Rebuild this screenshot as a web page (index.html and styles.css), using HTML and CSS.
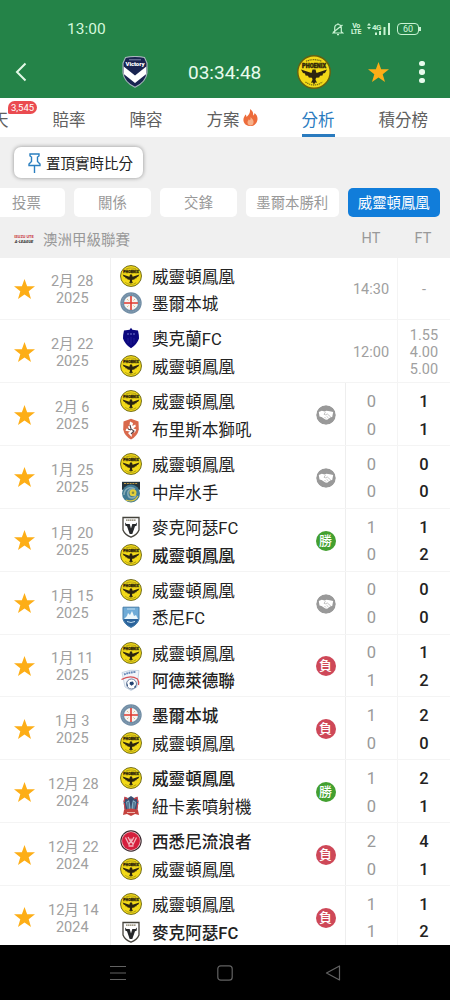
FILE: index.html
```html
<!DOCTYPE html>
<html lang="zh-Hant">
<head>
  <meta charset="UTF-8" />
  <meta name="viewport" content="width=device-width, initial-scale=1.0"/>
  <title>分析</title>
  <link rel="stylesheet" href="styles.css">
</head>
<body>
  <!-- Team crests and icons -->
  <svg class="sprites">
    <symbol id="star" viewBox="0 0 20 20">
      <path fill="#fdae17" d="M10 0l2.5 7H20l-6 4.6 2.2 7.4L10 14.7 3.8 19 6 11.6 0 7h7.5z"/>
    </symbol>
    <symbol id="phoenix" viewBox="0 0 34 34">
      <circle cx="17" cy="17" r="16.2" fill="#f2d918" stroke="#65600f" stroke-width="1.4"/>
      <path d="M9 6.2q8-3 16 0" fill="none" stroke="#6b6414" stroke-width="1.2" stroke-dasharray="1.2 .6"/>
      <text x="17" y="13" class="crest-text" font-size="6.4" textLength="24" lengthAdjust="spacingAndGlyphs" fill="#33290a" stroke="#33290a" stroke-width=".5">PHOENIX</text>
      <path fill="#2b2410" d="M15.500 14.500h3l1 3.500 10.500-3.500-2 3.500-2 .5-.5 2-2.500.3-.8 1.700-3.200.3-.5 2 1.500 3-1.800-.3L17 29.500l-1.200-2-1.800.3 1.500-3-.5-2-3.200-.3-.8-1.700-2.500-.3L8 18.500 6 18l-2-3.500L14.500 18z"/>
      <path d="M8.500 27q8.500 6 17 0" fill="none" stroke="#7c7212" stroke-width="1.3" stroke-dasharray="1.3 .7"/>
    </symbol>
    <symbol id="victory" viewBox="0 0 26 32">
      <path fill="#192450" stroke="#a9b6bd" stroke-width="1.1" d="M3.500 1.500q9.500-2 19 0l2.500 5.500v10q-1 9-12 14.300Q2 26 1 17V7z"/>
      <path fill="#fff" d="M1.700 10.500L13 19.500l11.300-9v7.500L13 27 1.700 18z"/>
      <path d="M7 3.800h12" stroke="#7f89a8" stroke-width="1"/>
      <text x="13" y="9.600" class="crest-text" font-size="6" textLength="19" fill="#fff">Victory</text>
    </symbol>
    <symbol id="city" viewBox="0 0 22 22">
      <circle cx="11" cy="11" r="10.700" fill="#718da5"/>
      <circle cx="11" cy="11" r="9" fill="none" stroke="#9cb0c0" stroke-width=".7" stroke-dasharray="1 .8"/>
      <circle cx="11" cy="11" r="7" fill="#f7f4f2"/>
      <path d="M11 4v14M4 11h14" stroke="#e0392f" stroke-width="1.600"/>
      <path d="M7 7l1.500 1.500M15 7l-1.500 1.500M7 15l1.500-1.500M15 15l-1.500-1.500" stroke="#dcc089"/>
    </symbol>
    <symbol id="auckland" viewBox="0 0 22 22">
      <path fill="#0c087e" d="M11 .8l1.400 2 5.600.7q1 4 1 8-2 6-8 9.800-6-3.800-8-9.800 0-4 1-8l5.600-.7z"/>
      <path d="M7 7h2M10 7h2M13 7h2" stroke="#777ad0" stroke-width="1"/>
      <path d="M8 11v5M11 10v8M14 11v5" stroke="#241e9c" stroke-width=".8"/>
    </symbol>
    <symbol id="brisbane" viewBox="0 0 22 22">
      <path fill="#d9694c" d="M11 .8l7.500 2.700.3 8Q17.500 18 11 21.500 4.500 18 3.200 11.500l.3-8z"/>
      <path fill="#fff" d="M10 3.500l3 1.500-.7 3 3-1.500.5 2-2.500 2 3 1-1.500 3-2.300-.5L11.500 19 8 15l2-1.500-4.500-.8 1-2.200 2.500.8L8 8.500l1.500-.8z"/>
      <path d="M10 7l1 4 3 2-3 3M8 11l3 1" fill="none" stroke="#54464a" stroke-width="1.1"/>
    </symbol>
    <symbol id="mariners" viewBox="0 0 22 22">
      <path fill="#25343c" d="M2 .8h18v8H2z"/>
      <path d="M4 2.500h14" stroke="#bd9b49" stroke-width="1" stroke-dasharray="2 .8"/>
      <circle cx="11" cy="12.500" r="9" fill="#3f7993"/>
      <path d="M4 14c0-6 6-9.500 11-6-5-1-8 2-7 6s7 4 8 0" fill="none" stroke="#87abb5" stroke-width="1.500"/>
      <circle cx="13" cy="11.800" r="3.500" fill="#e5cf3a"/>
      <circle cx="13" cy="11.800" r="1.300" fill="#7d8b49"/>
      <path d="M6 19q8 3 12-4" fill="none" stroke="#dfca40" stroke-width="1.200"/>
    </symbol>
    <symbol id="macarthur" viewBox="0 0 22 22">
      <path fill="#fff" stroke="#45433c" stroke-width="1.300" d="M3 1.500h16V14q-2 5-8 7.200Q5 19 3 14z"/>
      <path d="M6 4.200h10" stroke="#827a61" stroke-width="1.200" stroke-dasharray="1.500 .4"/>
      <path fill="#26282a" d="M5 6.500l1.500 1.500h3.200L11 12.500 12.300 8h3.200L17 6.500l-.4 3.300-1.600.5-2.700 7.700H9.700L7 10.300l-1.600-.5z"/>
    </symbol>
    <symbol id="sydney" viewBox="0 0 22 22">
      <path fill="#6fabd7" stroke="#467ca8" d="M3 1.200h16v12Q17.500 18.500 11 21.500 4.500 18.500 3 13.200z"/>
      <path fill="#2b639b" d="M3.500 13h15Q17.500 18 11 21 4.500 18 3.500 13z"/>
      <path fill="#edf7fb" d="M4 13l3-3 1-3 2 2 2-4 2 5 2-1 2 4z"/>
      <path d="M7 3h8M7 15.500q4 2 8 0" stroke="#c3def0" fill="none"/>
    </symbol>
    <symbol id="adelaide" viewBox="0 0 22 22">
      <path fill="#f1f5fa" stroke="#bccddd" stroke-width=".8" d="M2 3.500Q11 0 19 1.500L17 18l-6 3.500L5 18z"/>
      <path d="M4 5.500q6-2.500 12-2.500" fill="none" stroke="#6889b7" stroke-width="2" stroke-dasharray="1.800 .6"/>
      <path d="M1.500 10.500q9-5 16-.5 2 3 1 6" fill="none" stroke="#d75155" stroke-width="1.300"/>
      <circle cx="11.500" cy="15" r="5" fill="#fff" stroke="#5c7192" stroke-width=".9"/>
      <path fill="#234372" d="M10 13l3-.5 1 2.500-2.500 1.700L9.500 15zM7 14l1 2.500-1 1zM14 18l2-2-.5 3z"/>
    </symbol>
    <symbol id="jets" viewBox="0 0 22 22">
      <path fill="#384e72" d="M4.500 2L8 3l3-2 3 2 3.500-1 1 5-1.500 10-6 3-6-3L3.500 7z"/>
      <path fill="#80aec4" d="M6 7l3-2 2 8 2-8 3 2-1.500 8h-7z"/>
      <path d="M11 4v12M8 7v7M14 7v7" stroke="#32486b"/>
      <path fill="#c5423e" d="M4 15q7-3 14 0l1 5-4-1-4 2-4-2-4 1z"/>
      <path d="M7 17.500h8" stroke="#eeb4aa"/>
      <path d="M4 7l1-4.500L8 4M18 7l-1-4.500L14 4M4.200 8l1 7M17.800 8l-1 7" fill="none" stroke="#d4444a" stroke-width="1.200"/>
    </symbol>
    <symbol id="wanderers" viewBox="0 0 22 22">
      <circle cx="11" cy="11" r="10.700" fill="#35242a"/>
      <circle cx="11" cy="11" r="9.700" fill="#e9c4c8"/>
      <circle cx="11" cy="11" r="8.900" fill="#d51f3d"/>
      <path d="M5.500 7.500l3.500 7 2-5 2 5 3.500-7M8 7l3 5.500L14 7M8.500 16h5" fill="none" stroke="#f3b5bd" stroke-width="1.300"/>
    </symbol>
    <symbol id="handshake" viewBox="0 0 20 20">
      <circle cx="10" cy="10" r="9.800" fill="#999"/>
      <path fill="#fff" d="M2.800 7l3-1.300 3 .8 1.500-.7 3.500.4 3.400.8-1 5-1.600.3-3.500 2.500-1.800-.2L5.500 12l-2-.6z"/>
      <path d="M9.500 7L8 9.300l1.500.5L11.300 9l3.500 3M8.500 12l1.500 1.500M10.500 11.200l2 1.800" fill="none" stroke="#aaa" stroke-width=".7"/>
    </symbol>
  </svg>

  <header class="top">
    <div class="status">
      <span class="time">13:00</span>
      <svg class="bell" width="12" height="14" viewBox="0 0 12 14" fill="none" stroke="#c9f3d3" stroke-width="1.200">
        <path d="M2.700 9.800V6a3.300 3.500 0 016.600 0v3.800l1.500 1.200H1.200zM6 1.200v1.500M5 12.700h2M1 10.500L10.500 3"/>
      </svg>
      <span class="volte"><b>Vo</b><b>LTE</b></span>
      <svg class="signal" width="24" height="14" viewBox="0 0 24 14" fill="#c9f3d3">
        <path d="M0 3.500L2 1l2 2.500zM0 5l2 2.500L4 5zM8 10.500h2V13H8zM12 9h2v4h-2zM16.500 5h2v8h-2zM21 1h2v12h-2z"/>
        <text x="5" y="7.500" class="net">4G</text>
      </svg>
      <span class="battery">60</span>
    </div>
    <div class="title-row">
      <svg class="back" width="12" height="20" viewBox="0 0 12 20"><path d="M10.500 1.500L2 10l8.500 8.500" fill="none" stroke="#e3f9e7" stroke-width="2"/></svg>
      <svg class="home-crest" width="26" height="32"><use href="#victory"/></svg>
      <span class="clock">03:34:48</span>
      <svg class="away-crest" width="34" height="34"><use href="#phoenix"/></svg>
      <svg class="top-star" width="21" height="21"><use href="#star"/></svg>
      <span class="more"><i></i><i></i><i></i></span>
    </div>
  </header>

  <nav class="tabs">
    <span class="tab">天<em class="count">3,545</em></span>
    <span class="tab">賠率</span>
    <span class="tab">陣容</span>
    <span class="tab">方案<svg class="flame" width="15" height="17" viewBox="0 0 15 17"><path fill="#ed6c3b" d="M7 0c3 2 3.500 4.500 3 6.500 1-.4 1.500-1.500 1.500-2.500C14 6 15 8.500 14.300 11.500 13.500 15 11 17 7.500 17S1 15 .5 12C0 9 1.500 7.500 2.500 5.500c.8.800 1 1.500 1 2.500C6 6 7.500 3.500 7 0z"/><path fill="#f7b18a" d="M7.500 8c2 2 3.500 3.500 3 6-.3 1.700-1.500 2.500-3 2.500s-3-1-3-3c0-1.500 1-2 1.300-3.200l1 1C7.500 10.500 7.800 9.500 7.500 8z"/></svg></span>
    <span class="tab active">分析</span>
    <span class="tab">積分榜</span>
  </nav>

  <section class="filters">
    <div class="pin-btn">
      <svg width="13" height="20" viewBox="0 0 13 20" fill="none" stroke="#2b7fc0" stroke-width="1.400"><path d="M2 1h9v2L9.500 4v4.500L12 11v1.500H1V11l2.500-2.500V4L2 3zM6.500 12.500V20"/></svg>
      置頂實時比分
    </div>
    <div class="chips">
      <span class="chip">投票</span>
      <span class="chip">關係</span>
      <span class="chip">交鋒</span>
      <span class="chip wide">墨爾本勝利</span>
      <span class="chip wide selected">威靈頓鳳凰</span>
    </div>
    <div class="league">
      <span class="league-logo"><b>ISUZU UTE</b><i>A-LEAGUE</i></span>
      <span class="league-name">澳洲甲級聯賽</span>
      <span class="col-head">HT</span>
      <span class="col-head">FT</span>
    </div>
  </section>

  <main id="matches"></main>

  <footer class="navbar">
    <svg width="16" height="16" viewBox="0 0 16 16"><path d="M0 1.500h16M0 8h16M0 14.500h16"/></svg>
    <svg width="16" height="16" viewBox="0 0 16 16"><rect x=".8" y=".8" width="14.400" height="14.400" rx="3"/></svg>
    <svg width="16" height="16" viewBox="0 0 16 16"><path d="M14.500 1v14L1.500 8z" stroke-linejoin="round"/></svg>
  </footer>

  <script>
    const teams = {
      phoenix: '威靈頓鳳凰',
      city: '墨爾本城',
      auckland: '奧克蘭FC',
      brisbane: '布里斯本獅吼',
      mariners: '中岸水手',
      macarthur: '麥克阿瑟FC',
      sydney: '悉尼FC',
      adelaide: '阿德萊德聯',
      jets: '紐卡素噴射機',
      wanderers: '西悉尼流浪者'
    };

    const matches = [
      { date: '2月 28', year: 2025, home: 'phoenix', away: 'city', kickoff: '14:30', odds: ['-'] },
      { date: '2月 22', year: 2025, home: 'auckland', away: 'phoenix', kickoff: '12:00', odds: ['1.55', '4.00', '5.00'] },
      { date: '2月 6', year: 2025, home: 'phoenix', away: 'brisbane', ht: [0, 0], ft: [1, 1] },
      { date: '1月 25', year: 2025, home: 'phoenix', away: 'mariners', ht: [0, 0], ft: [0, 0] },
      { date: '1月 20', year: 2025, home: 'macarthur', away: 'phoenix', ht: [1, 0], ft: [1, 2] },
      { date: '1月 15', year: 2025, home: 'phoenix', away: 'sydney', ht: [0, 0], ft: [0, 0] },
      { date: '1月 11', year: 2025, home: 'phoenix', away: 'adelaide', ht: [0, 1], ft: [1, 2] },
      { date: '1月 3', year: 2025, home: 'city', away: 'phoenix', ht: [1, 0], ft: [2, 0] },
      { date: '12月 28', year: 2024, home: 'phoenix', away: 'jets', ht: [1, 0], ft: [2, 1] },
      { date: '12月 22', year: 2024, home: 'wanderers', away: 'phoenix', ht: [2, 0], ft: [4, 1] },
      { date: '12月 14', year: 2024, home: 'phoenix', away: 'macarthur', ht: [1, 1], ft: [1, 2] }
    ];

    function teamLine(id, won) {
      return `<div class="team${won ? ' won' : ''}"><svg width="22" height="22"><use href="#${id}"/></svg>${teams[id]}</div>`;
    }

    function resultBadge(m, winner) {
      if (!m.ft) return '';
      if (!winner) return '<svg class="result" width="20" height="20"><use href="#handshake"/></svg>';
      return winner === 'phoenix'
        ? '<span class="result win">勝</span>'
        : '<span class="result loss">負</span>';
    }

    document.getElementById('matches').innerHTML = matches.map(m => {
      let winner = null;
      if (m.ft && m.ft[0] !== m.ft[1]) winner = m.ft[0] > m.ft[1] ? m.home : m.away;

      const scores = m.ft
        ? `<div class="ht">${m.ht.map(s => `<span>${s}</span>`).join('')}</div>
           <div class="ft">${m.ft.map(s => `<span>${s}</span>`).join('')}</div>`
        : `<div class="kickoff">${m.kickoff}</div>
           <div class="odds">${m.odds.map(o => `<span>${o}</span>`).join('')}</div>`;

      return `
        <div class="match">
          <svg class="fav" width="21" height="21"><use href="#star"/></svg>
          <div class="date"><span>${m.date}</span><span>${m.year}</span></div>
          <div class="teams">
            <div>${teamLine(m.home, winner === m.home)}${teamLine(m.away, winner === m.away)}</div>
            ${resultBadge(m, winner)}
          </div>
          ${scores}
        </div>`;
    }).join('');
  </script>
</body>
</html>
```
FILE: styles.css
```css
* {
  box-sizing: border-box;
}

body {
  margin: 0;
  width: 450px;
  height: 1000px;
  overflow: hidden;
  display: flex;
  flex-direction: column;
  font-family: Roboto, "Noto Sans CJK TC", sans-serif;
  background: #fff;
  color: #222;
}

svg {
  display: block;
  flex: none;
}

.sprites {
  display: none;
}

.crest-text {
  font-family: Roboto, sans-serif;
  font-weight: 900;
  text-anchor: middle;
}

/* Header */
.top {
  height: 98px;
  flex: none;
  padding-top: 12px;
  background: #248348;
}

.status {
  display: flex;
  align-items: center;
  height: 34px;
  padding-left: 67px;
  color: #d3f8dc;
}

.time {
  width: 265px;
  font-size: 15.5px;
}

.volte {
  display: flex;
  flex-direction: column;
  width: 10px;
  margin: 0 6px 0 7px;
  font-size: 7px;
  line-height: 6px;
  letter-spacing: -0.5px;
  text-align: center;
}

.net {
  font-size: 8px;
  font-weight: bold;
  letter-spacing: -0.5px;
}

.battery {
  position: relative;
  width: 22px;
  height: 12px;
  margin-left: 6px;
  border: 1px solid #c9f3d3;
  border-radius: 4px;
  font-size: 9px;
  line-height: 11px;
  text-align: center;
}

.battery::after {
  content: "";
  position: absolute;
  top: 3px;
  right: -3px;
  width: 2px;
  height: 4px;
  background: #c9f3d3;
}

.title-row {
  display: flex;
  align-items: center;
  height: 52px;
  padding-left: 15px;
}

.home-crest {
  margin-left: 95px;
}

.clock {
  width: 73px;
  margin: 0 36px 0 40px;
  font-size: 19px;
  color: #e8fbed;
  white-space: nowrap;
}

.top-star {
  margin-left: 37px;
}

.more {
  display: flex;
  flex-direction: column;
  gap: 3px;
  margin-left: 30px;
}

.more i {
  width: 5.5px;
  height: 5.5px;
  border-radius: 50%;
  background: #e8fbed;
}

/* Tabs */
.tabs {
  display: flex;
  flex: none;
  gap: 44px;
  height: 39px;
  margin-left: -8px;
  font-size: 16.5px;
  color: #606060;
}

.tab {
  position: relative;
  display: flex;
  align-items: center;
  white-space: nowrap;
  height: 39px;
  padding-top: 3px;
}

.tab.active {
  padding-top: 6px;
  color: #2a7bbf;
  border-bottom: 3px solid #2a7bbf;
}

.flame {
  margin: -3px 0 0 3px;
}

.count {
  position: absolute;
  top: 3px;
  left: 16px;
  width: 29px;
  height: 13px;
  border-radius: 7px 7px 7px 2px;
  background: #ea4b50;
  color: #fff;
  font-size: 9.5px;
  font-style: normal;
  line-height: 14px;
  text-align: center;
}

/* Filters */
.filters {
  flex: none;
  height: 120.5px;
  padding-top: 10px;
  background: #f0f0f0;
}

.pin-btn {
  display: flex;
  align-items: center;
  gap: 5px;
  width: 129px;
  height: 31px;
  margin-left: 14px;
  padding-left: 14px;
  border-radius: 7px;
  background: #fff;
  box-shadow: 0 0 4px rgba(0, 0, 0, 0.4);
  font-size: 14.5px;
  white-space: nowrap;
}

.chips {
  display: flex;
  gap: 9px;
  margin: 10px 0 0 -12px;
}

.chip {
  flex: none;
  width: 77px;
  height: 29px;
  border-radius: 5px;
  background: #fff;
  color: #999;
  font-size: 14.4px;
  line-height: 32px;
  text-align: center;
}

.chip.wide {
  width: 92.5px;
}

.chip.selected {
  background: #117dda;
  color: #fff;
}

.league {
  display: flex;
  align-items: center;
  height: 40px;
  margin-top: 1px;
  padding: 1px 0 0 14px;
  font-size: 14.5px;
  color: #999;
}

.league-logo {
  display: flex;
  flex-direction: column;
  align-items: center;
  width: 20px;
  margin-right: 9px;
  font-size: 4px;
  line-height: 5px;
  white-space: nowrap;
}

.league-logo b {
  color: #c8343c;
}

.league-logo i {
  color: #222;
  font-weight: bold;
}

.league-name {
  width: 302px;
}

.col-head {
  width: 52px;
  text-align: center;
}

/* Match list */
#matches {
  height: 687.5px;
  overflow: hidden;
}

.match {
  display: grid;
  grid-template-columns: 48px 62.5px 234.5px 52px 53px;
  height: 62.85px;
  border-bottom: 1px solid #f4f4f4;
}

.fav {
  align-self: center;
  justify-self: center;
  margin-top: 2px;
}

.date {
  display: flex;
  flex-direction: column;
  justify-content: center;
  padding: 4px 13px 0 0;
  border-right: 1px solid #f0f0f0;
  color: #a0a0a0;
  font-size: 14.5px;
  line-height: 17px;
  text-align: center;
  white-space: nowrap;
}

.teams {
  display: flex;
  align-items: center;
  justify-content: space-between;
  padding: 2px 9.5px 0 9.5px;
}

.team {
  display: flex;
  align-items: center;
  gap: 10px;
  height: 27.7px;
  font-size: 16.6px;
}

.team.won {
  font-weight: 500;
}

.result {
  width: 20px;
  height: 20px;
  border-radius: 50%;
  color: #fff;
  font-size: 13px;
  font-weight: 500;
  line-height: 19px;
  text-align: center;
}

.win {
  background: #43a030;
}

.loss {
  background: #ce4858;
}

.ht,
.ft {
  display: flex;
  flex-direction: column;
  justify-content: center;
  padding-top: 3px;
  border-left: 1px solid #eee;
  font-size: 16.5px;
  line-height: 27.7px;
  text-align: center;
}

.ht {
  color: #999;
}

.ft {
  border-left-color: #f4f4f4;
  font-weight: 500;
}

.kickoff,
.odds {
  display: flex;
  flex-direction: column;
  justify-content: center;
  padding-top: 3px;
  color: #a0a0a0;
  font-size: 14.5px;
  line-height: 17px;
  text-align: center;
}

.odds {
  border-left: 1px solid #f4f4f4;
}

/* System navigation */
.navbar {
  display: flex;
  flex: none;
  align-items: center;
  justify-content: center;
  gap: 91.5px;
  height: 55px;
  background: #000;
}

.navbar svg {
  fill: none;
  stroke: #626262;
  stroke-width: 1.2;
}
```
